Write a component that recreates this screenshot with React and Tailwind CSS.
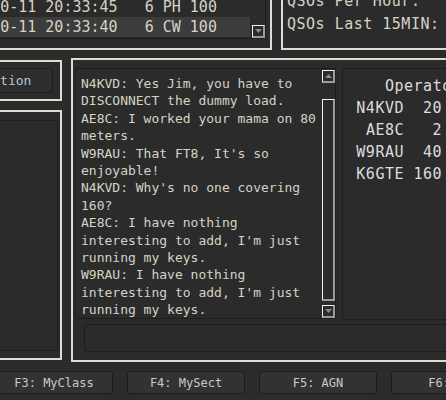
import React from 'react';

const chat = [
  "N4KVD: Yes Jim, you have to DISCONNECT the dummy load.",
  "AE8C: I worked your mama on 80 meters.",
  "W9RAU: That FT8, It's so enjoyable!",
  "N4KVD: Why's no one covering 160?",
  "AE8C: I have nothing interesting to add, I'm just running my keys.",
  "W9RAU: I have nothing interesting to add, I'm just running my keys.",
];

const operators = [
  ['N4KVD', '20'],
  ['AE8C', '2'],
  ['W9RAU', '40'],
  ['K6GTE', '160'],
];

const buttons = ['F3: MyClass', 'F4: MySect', 'F5: AGN', 'F6: TU'];

const Arrow = ({ up }) => (
  <div className="w-[13px] h-[13px] border-t border-l border-t-[#f2f2f2] border-l-[#f2f2f2] border-r-2 border-b-2 border-r-[#9a9a9a] border-b-[#9a9a9a] flex items-center justify-center">
    <svg width="7" height="4" viewBox="0 0 7 4">
      {up ? <path d="M0 4 L3.5 0 L7 4 Z" fill="#8c8c8c" /> : <path d="M0 0 L7 0 L3.5 4 Z" fill="#8c8c8c" />}
    </svg>
  </div>
);

export default function App() {
  return (
    <div className="w-[446px] h-[400px] overflow-hidden bg-[#2b2b2b] text-[#d6d2c6] font-['DejaVu_Sans_Mono',monospace]">
      {/* top panels */}
      <div className="flex h-[50px]">
        <div className="w-[272px] shrink-0 border-r-2 border-b-2 border-[#dcdcd2] pr-[4px] pb-[9px]">
          <div className="h-full flex border-r border-b border-[#1e1e1e]">
            <div className="w-[250px] flex flex-col justify-end overflow-hidden pb-[1px] text-[15px] leading-[20px] whitespace-pre">
              <div className="ml-[-54px]">2023-10-11 20:33:45   6 PH 100</div>
              <div className="ml-[-54px] bg-[#3c3c3c]">2023-10-11 20:33:40   6 CW 100</div>
            </div>
            <div className="flex-1 flex flex-col justify-end pl-[2px]">
              <Arrow />
            </div>
          </div>
        </div>
        <div className="ml-[9px] flex-1 border-l-2 border-b-2 border-[#dcdcd2] flex flex-col justify-end overflow-hidden pl-[4px] pb-[12px] text-[15px] tracking-[0.5px] leading-[23px] whitespace-nowrap">
          <div>QSOs Per Hour:</div>
          <div>QSOs Last 15MIN:</div>
        </div>
      </div>

      {/* main area */}
      <div className="flex mt-[8px] h-[304px]">
        <div className="w-[62px] shrink-0 pt-[2px] flex flex-col">
          <div className="h-[41px] border-t-2 border-r-2 border-b-2 border-[#dcdcd2] pt-[6px]">
            <div className="ml-[-45px] mr-[7px] h-[25px] rounded-[4px] border border-[#1e1e1e] bg-[#2d2d2d] flex items-center justify-center text-[13px] text-[#b4c6dc]">
              Section
            </div>
          </div>
          <div className="mt-[9px] h-[250px] border-t-2 border-r-2 border-b-2 border-[#dcdcd2] pt-[8px]">
            <div className="mr-[2px] h-[231px] border-t border-r border-b border-[#1e1e1e]" />
          </div>
        </div>

        <div className="ml-[9px] flex-1 border-t-2 border-l-2 border-b-2 border-[#dcdcd2] pt-[8px] pl-[2px] flex flex-col">
          <div className="flex gap-[6px]">
            <div className="w-[261px] h-[251px] shrink-0 border border-[#1e1e1e] flex">
              <div className="w-[246px] pl-[5px] pt-[6px] text-[13px] leading-[17.4px] overflow-hidden">
                {chat.map((line, i) => (
                  <div key={i}>{line}</div>
                ))}
              </div>
              <div className="w-[13px] flex flex-col pt-[1px]">
                <Arrow up />
                <div className="mt-[16px] h-[202px] border-t border-l border-t-[#f2f2f2] border-l-[#f2f2f2] border-r-2 border-b-2 border-r-[#9a9a9a] border-b-[#9a9a9a]" />
                <div className="mt-[4px]">
                  <Arrow />
                </div>
              </div>
            </div>
            <div className="flex-1 h-[252px] border border-[#1e1e1e] pt-[6px] pl-[13px] text-[15px] tracking-[0.5px] leading-[22px] text-[#dcdcdc] whitespace-nowrap overflow-hidden">
              <div className="pl-[29px]">Operators</div>
              {operators.map(([call, n]) => (
                <div key={call} className="flex">
                  <span className="w-[48px] text-right">{call}</span>
                  <span className="w-[38px] text-right">{n}</span>
                </div>
              ))}
            </div>
          </div>
          <div className="mt-[4px] ml-[9px] h-[28px] rounded-[3px] border border-[#1e1e1e]" />
        </div>
      </div>

      {/* function keys */}
      <div className="flex gap-[14px] mt-[9px] ml-[-5px] whitespace-nowrap">
        {buttons.map((b) => (
          <div key={b} className="w-[118px] h-[23px] shrink-0 rounded-[3px] border border-[#1c1c1c] bg-[#323232] flex items-center justify-center text-[12px] text-[#c4cad0]">
            {b}
          </div>
        ))}
      </div>
    </div>
  );
}
